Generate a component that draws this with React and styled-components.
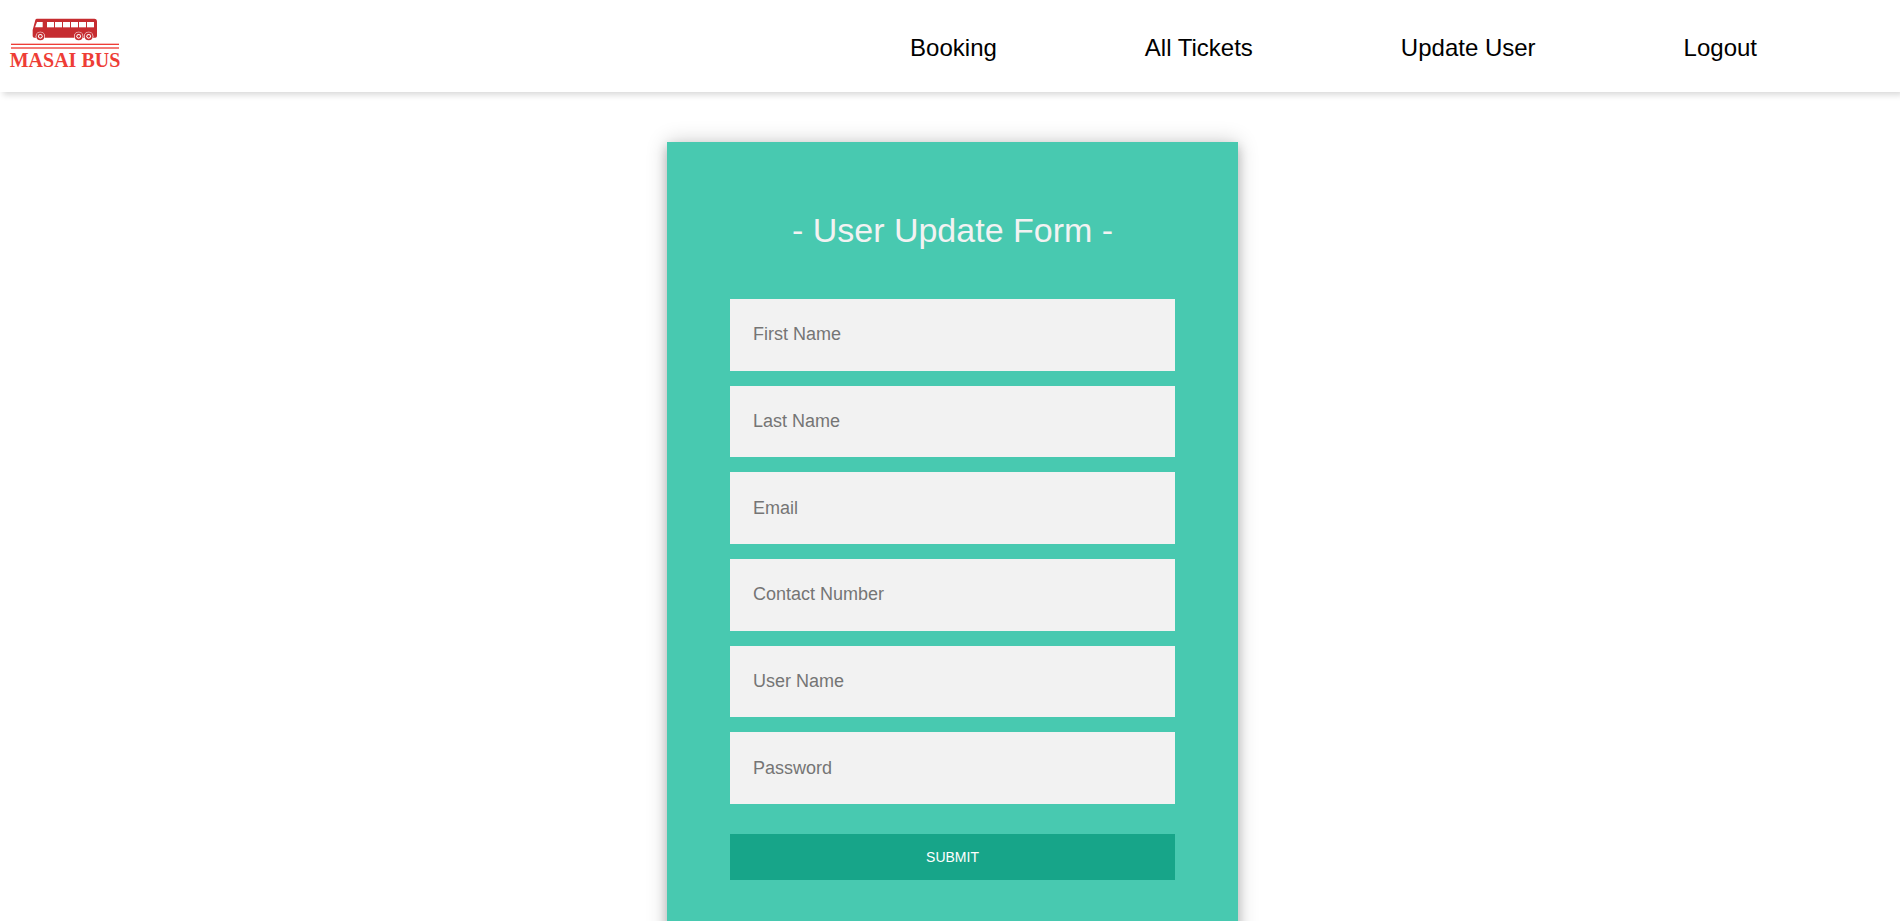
import React from "react";
import styled, { createGlobalStyle } from "styled-components";

const GlobalStyle = createGlobalStyle`
  * { box-sizing: border-box; }
  body {
    margin: 0;
    background: #ffffff;
    font-family: "Liberation Sans", Arial, sans-serif;
  }
`;

const Header = styled.header`
  display: flex;
  align-items: center;
  justify-content: space-between;
  min-height: 92px;
  padding: 0 143px 0 11px;
  background: #ffffff;
  box-shadow: 3px 3px 6px rgba(0, 0, 0, 0.15);
`;

const LogoLink = styled.a`
  display: block;
  padding-bottom: 6px;
`;

const LogoDrawing = styled.svg`
  display: block;
  width: 108px;
  height: 50px;
  overflow: visible;
`;

const LogoText = styled.text`
  font-family: "Liberation Serif", "Times New Roman", serif;
  font-size: 60px;
  font-weight: 700;
  fill: #ee3d36;
`;

const Nav = styled.nav`
  display: flex;
  gap: 148px;
  padding-top: 4px;
`;

const NavLink = styled.a`
  color: #000000;
  font-size: 24px;
  line-height: 28px;
  text-decoration: none;
  white-space: nowrap;
`;

const Main = styled.main`
  padding: 50px 0 50px 5px;
`;

const Card = styled.form`
  width: 571px;
  max-width: 100%;
  margin: 0 auto;
  padding: 68px 63px 62px;
  background: #48c9b0;
  box-shadow: 0 0 20px 0 rgba(0, 0, 0, 0.2), 0 5px 10px 0 rgba(0, 0, 0, 0.2);
`;

const Title = styled.h1`
  margin: 0 0 49px;
  color: #f2f2f2;
  font-size: 34px;
  font-weight: 400;
  line-height: 40px;
  text-align: center;
`;

const Fields = styled.div`
  display: grid;
  grid-auto-rows: 1fr;
  gap: 15px;
  min-height: 505px;
  margin-bottom: 30px;
`;

const Field = styled.input`
  width: 100%;
  padding: 0 23px;
  border: 0;
  border-radius: 0;
  outline: 0;
  background: #f2f2f2;
  font-family: inherit;
  font-size: 18px;

  &::placeholder {
    color: #757575;
  }
`;

const SubmitButton = styled.button`
  display: block;
  width: 100%;
  padding: 15px;
  border: 0;
  background: #17a589;
  color: #ffffff;
  font-family: inherit;
  font-size: 14px;
  line-height: 16px;
  text-transform: uppercase;
  cursor: pointer;
`;

const links = ["Booking", "All Tickets", "Update User", "Logout"];

const fields = [
  { name: "firstName", label: "First Name", type: "text" },
  { name: "lastName", label: "Last Name", type: "text" },
  { name: "email", label: "Email", type: "email" },
  { name: "contact", label: "Contact Number", type: "tel" },
  { name: "userName", label: "User Name", type: "text" },
  { name: "password", label: "Password", type: "password" },
];

const windows = [108, 132, 156, 180, 204, 228];
const wheels = [88, 203, 233];

function Logo() {
  return (
    <LogoDrawing viewBox="0 0 324 150" role="img" aria-label="Masai Bus">
      <path
        d="M78 2H250Q258 2 258 11V54Q258 59 253 59H70Q65 59 65 54V36L73 6Q74 2 78 2Z"
        fill="#c62c30"
      />
      <path d="M78 12H95V28H72Z" fill="#ffffff" />
      {windows.map((x) => (
        <rect key={x} x={x} y="12" width="21" height="16" fill="#ffffff" />
      ))}
      {wheels.map((x) => (
        <g key={x}>
          <circle cx={x} cy="55" r="14" fill="#ffffff" />
          <circle cx={x} cy="55" r="12" fill="#c62c30" />
          <circle cx={x} cy="55" r="7" fill="#ffffff" />
          <circle cx={x} cy="55" r="4" fill="#c62c30" />
        </g>
      ))}
      <rect y="77" width="324" height="4" fill="#ee3d36" />
      <rect y="88" width="324" height="4" fill="#ee3d36" />
      <LogoText x="162" y="148" textAnchor="middle">
        MASAI BUS
      </LogoText>
    </LogoDrawing>
  );
}

export default function App() {
  return (
    <>
      <GlobalStyle />
      <Header>
        <LogoLink href="#home">
          <Logo />
        </LogoLink>
        <Nav>
          {links.map((label) => (
            <NavLink key={label} href={"#" + label.toLowerCase().replace(" ", "-")}>
              {label}
            </NavLink>
          ))}
        </Nav>
      </Header>
      <Main>
        <Card onSubmit={(event) => event.preventDefault()}>
          <Title>- User Update Form -</Title>
          <Fields>
            {fields.map(({ name, label, type }) => (
              <Field key={name} name={name} type={type} placeholder={label} aria-label={label} />
            ))}
          </Fields>
          <SubmitButton type="submit">Submit</SubmitButton>
        </Card>
      </Main>
    </>
  );
}
